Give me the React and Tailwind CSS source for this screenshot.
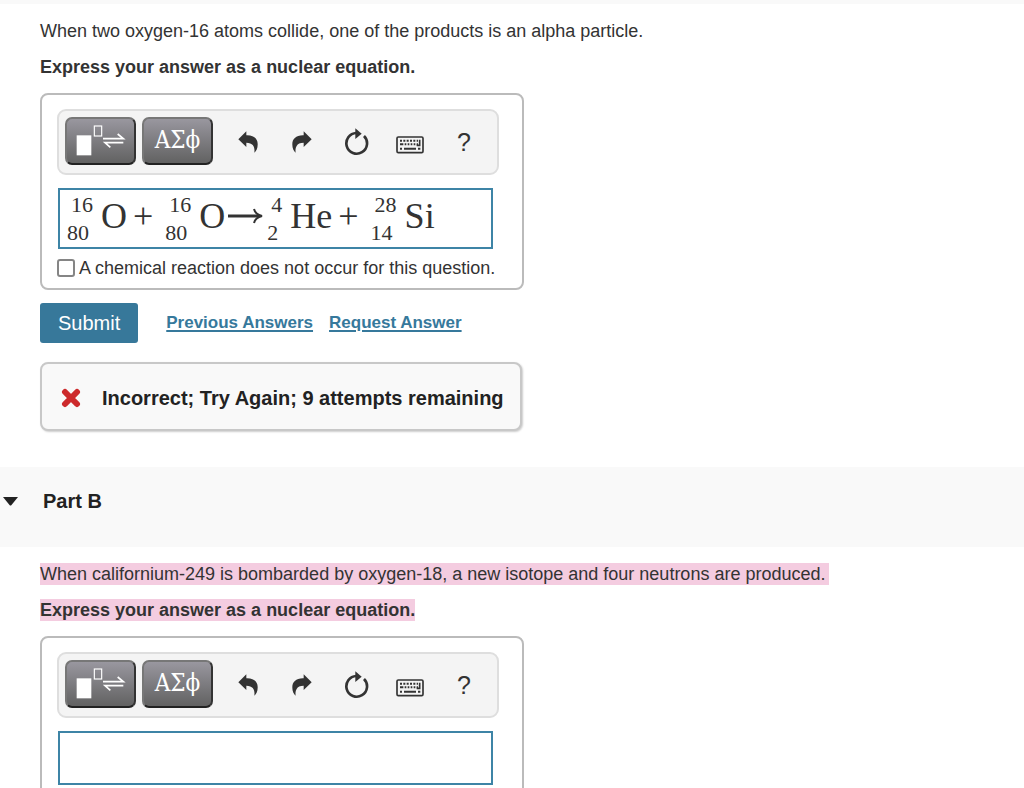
import React from "react";

function TemplatesIcon() {
  return (
    <svg width="50" height="32" viewBox="0 0 150 96" fill="none" aria-hidden="true">
      <rect x="2" y="31" width="44" height="60" fill="#fff" />
      <rect x="55" y="3" width="22" height="30" stroke="#fff" strokeWidth="3.500" />
      <path d="M81 41H142L125 27" stroke="#fff" strokeWidth="5" />
      <path d="M142 53H87L103 67" stroke="#fff" strokeWidth="5" />
    </svg>
  );
}

function UndoIcon({ flipped }) {
  return (
    <svg
      width="22"
      height="24"
      viewBox="0 0 66 72"
      fill="#333"
      aria-hidden="true"
      className={flipped ? "-scale-x-100" : ""}
    >
      <path d="M4 28L28 4V16C50 15 63 27 62 44C62 55 58 63 52 68C54 53 50 38 28 38V51Z" />
    </svg>
  );
}

function ResetIcon() {
  return (
    <svg width="26" height="28" viewBox="0 0 78 84" fill="none" aria-hidden="true">
      <path d="M63 24A31 31 0 1 1 40 15" stroke="#333" strokeWidth="8" />
      <path d="M37 1L56 17L37 33Z" fill="#333" />
    </svg>
  );
}

function KeyboardIcon() {
  return (
    <svg width="28" height="18" viewBox="0 0 84 54" fill="none" aria-hidden="true">
      <rect x="3" y="3" width="78" height="47" rx="4" stroke="#333" strokeWidth="5" />
      <path d="M12 14H66" stroke="#333" strokeWidth="6" strokeDasharray="6 4" />
      <path d="M12 25H66" stroke="#333" strokeWidth="6" strokeDasharray="10 4 5 4 5 4 5 4 5 4" />
      <path d="M71 11V28H62" stroke="#333" strokeWidth="5" />
      <path d="M12 38H18M24 38H60M66 38H73" stroke="#333" strokeWidth="6" />
    </svg>
  );
}

const darkButton =
  "flex h-12 w-[71px] items-center justify-center rounded-[7px] border-2 border-t-[#777] border-l-[#777] border-r-[#333] border-b-[#222] bg-linear-to-b from-[#99979f] to-[#626262] text-white";
const iconButton = "flex h-8 w-8 items-center justify-center text-[#333]";

function Toolbar() {
  return (
    <div
      role="toolbar"
      aria-label="Equation tools"
      className="mr-2 flex h-[66px] items-center rounded-[9px] border-2 border-[#dedede] bg-[#f4f4f4] px-[6px]"
    >
      <div className="flex gap-[6px] pb-[2px]">
        <button type="button" aria-label="Templates" className={darkButton}>
          <TemplatesIcon />
        </button>
        <button
          type="button"
          aria-label="Greek letters"
          className={`${darkButton} pb-[2px] font-['DejaVu_Serif_Condensed','DejaVu_Serif',serif] text-2xl leading-6`}
        >
          ΑΣϕ
        </button>
      </div>
      <div className="ml-[19px] flex gap-[22px]">
        <button type="button" aria-label="Undo" className={iconButton}>
          <UndoIcon />
        </button>
        <button type="button" aria-label="Redo" className={iconButton}>
          <UndoIcon flipped />
        </button>
        <button type="button" aria-label="Reset" className={iconButton}>
          <ResetIcon />
        </button>
        <button type="button" aria-label="Keyboard shortcuts" className={`${iconButton} pt-[6px]`}>
          <KeyboardIcon />
        </button>
        <button type="button" aria-label="Help" className={`${iconButton} text-[25px]`}>
          ?
        </button>
      </div>
    </div>
  );
}

function Nuclide({ mass, number, symbol }) {
  return (
    <span className="flex items-center gap-2">
      <span className="flex flex-col text-[22px] leading-7">
        <span className="pl-1">{mass}</span>
        <span>{number}</span>
      </span>
      <span className="pb-[6px]">{symbol}</span>
    </span>
  );
}

function Plus() {
  return <span className="mr-3 ml-[6px] pb-[6px]">+</span>;
}

function Arrow() {
  return (
    <svg width="36" height="20" viewBox="0 0 36 20" fill="none" aria-label="yields" role="img">
      <path d="M1 10H32" stroke="#333" strokeWidth="3" />
      <path d="M27 3C28 7 31 9 35 10C31 11 28 13 27 17" stroke="#333" strokeWidth="2" />
    </svg>
  );
}

function Equation() {
  return (
    <div
      role="textbox"
      aria-label="Answer for Part A"
      tabIndex={0}
      className="mr-[14px] ml-px flex h-[61px] items-center border-2 border-[#3d84a6] px-[7px] font-['Liberation_Serif',serif] text-[36px] leading-9 text-[#333]"
    >
      <Nuclide mass="16" number="80" symbol="O" />
      <Plus />
      <Nuclide mass="16" number="80" symbol="O" />
      <span className="mr-1 ml-[2px] pb-[6px]">
        <Arrow />
      </span>
      <Nuclide mass="4" number="2" symbol="He" />
      <Plus />
      <Nuclide mass="28" number="14" symbol="Si" />
    </div>
  );
}

const card = "w-full max-w-[484px] rounded-lg border-2 border-[#bbb] px-[15px] pt-[14px]";

export default function App() {
  return (
    <main className="h-screen overflow-hidden bg-white font-['Liberation_Sans',Arial,sans-serif] text-lg leading-6 text-[#333]">
      <div className="h-1 bg-[#f9f9f9]" />
      <section className="px-10 pt-[15px] pb-9">
        <p>When two oxygen-16 atoms collide, one of the products is an alpha particle.</p>
        <p className="mt-3 font-bold">Express your answer as a nuclear equation.</p>

        <div className={`${card} mt-[14px] pb-2`}>
          <Toolbar />
          <div className="mt-[13px]">
            <Equation />
          </div>
          <label className="mt-[7px] flex items-center gap-1 whitespace-nowrap">
            <input
              type="checkbox"
              className="h-[18px] w-[18px] shrink-0 appearance-none rounded-[3px] border-2 border-[#858585] bg-white"
            />
            A chemical reaction does not occur for this question.
          </label>
        </div>

        <div className="mt-[13px] flex items-center">
          <button type="button" className="h-10 rounded-[3px] bg-[#37789a] px-[18px] text-xl text-white">
            Submit
          </button>
          <a
            href="#previous"
            className="ml-7 text-[17px] font-bold text-[#36799c] underline decoration-2 underline-offset-2"
          >
            Previous Answers
          </a>
          <a
            href="#request"
            className="ml-4 text-[17px] font-bold text-[#36799c] underline decoration-2 underline-offset-2"
          >
            Request Answer
          </a>
        </div>

        <div
          role="status"
          className="mt-[19px] flex h-[69px] w-full max-w-[482px] items-center rounded-lg border-2 border-[#c8c8c8] bg-[#f9f9f9] pt-[2px] pl-[19px] text-xl font-bold whitespace-nowrap text-[#222] shadow-[1px_1px_2px_rgba(0,0,0,0.2)]"
        >
          <svg width="20" height="20" viewBox="0 0 20 20" fill="none" aria-hidden="true" className="mr-[21px] shrink-0">
            <path d="M4 4L16 16M16 4L4 16" stroke="#cd2a2c" strokeWidth="6" strokeLinecap="round" />
          </svg>
          Incorrect; Try Again; 9 attempts remaining
        </div>
      </section>

      <section>
        <h2>
          <button
            type="button"
            aria-expanded="true"
            className="flex h-20 w-full items-center gap-[25px] bg-[#f9f9f9] pb-3 pl-[3px] text-xl font-bold text-[#222]"
          >
            <svg width="15" height="9" viewBox="0 0 15 9" fill="#222" aria-hidden="true">
              <path d="M0 0H15L8.5 8Q7.500 9 6.500 8Z" />
            </svg>
            Part B
          </button>
        </h2>
        <div className="px-10 pt-[15px]">
          <p>
            <span className="bg-[#f4cce0] py-px pr-1">
              When californium-249 is bombarded by oxygen-18, a new isotope and four neutrons are produced.
            </span>
          </p>
          <p className="mt-3 font-bold">
            <span className="bg-[#f4cce0] py-px">Express your answer as a nuclear equation.</span>
          </p>
          <div className={`${card} mt-[14px] pb-12`}>
            <Toolbar />
            <div className="mt-[13px] mr-[14px] ml-px">
              <input
                type="text"
                aria-label="Answer for Part B"
                className="block h-[54px] w-full border-2 border-[#3d84a6] bg-white px-2 font-['Liberation_Serif',serif] text-[36px]"
              />
            </div>
          </div>
        </div>
      </section>
    </main>
  );
}
